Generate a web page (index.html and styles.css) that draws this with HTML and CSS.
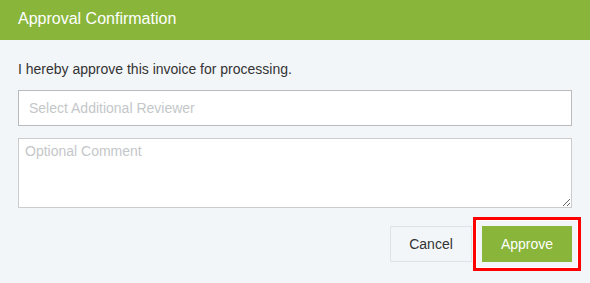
FILE: index.html
```html
<!DOCTYPE html>
<html lang="en">
<head>
  <meta charset="UTF-8">
  <title>Approval Confirmation</title>
  <link rel="stylesheet" href="styles.css">
</head>
<body>

  <div class="modal">
    <div class="modal-header">Approval Confirmation</div>

    <div class="modal-body">
      <p class="intro">I hereby approve this invoice for processing.</p>

      <input type="text" class="reviewer" placeholder="Select Additional Reviewer">

      <textarea class="comment" placeholder="Optional Comment"></textarea>

      <div class="actions">
        <button class="btn btn-cancel">Cancel</button>
        <button class="btn btn-approve">Approve</button>
      </div>
    </div>
  </div>

</body>
</html>
```

FILE: styles.css
```css
body {
  margin: 0;
  background-color: #f3f6f9;
  font-family: "Liberation Sans", Arial, sans-serif;
  color: #333;
}

.modal {
  width: 590px;
  height: 283px;
  background-color: #f3f6f9;
}

.modal-header {
  height: 40px;
  line-height: 38px;
  padding-left: 18px;
  background-color: #88b53a;
  color: #fff;
  font-size: 16px;
}

.modal-body {
  padding: 0 18px;
}

.intro {
  margin: 0;
  padding-top: 19px;
  height: 31px;
  line-height: 20px;
  font-size: 14px;
  color: #333;
}

.reviewer {
  display: block;
  box-sizing: border-box;
  width: 554px;
  height: 36px;
  margin: 0;
  padding: 0 10px;
  border: 1px solid #b9bcbf;
  background-color: #fff;
  font-family: inherit;
  font-size: 14px;
  outline: none;
}

.comment {
  display: block;
  box-sizing: border-box;
  width: 554px;
  height: 70px;
  margin: 12px 0 0;
  padding: 4px 6px;
  border: 1px solid #ccc;
  background-color: #fff;
  font-family: inherit;
  font-size: 14px;
  outline: none;
}

.reviewer::placeholder,
.comment::placeholder {
  color: #c4c7ca;
}

.actions {
  display: flex;
  justify-content: flex-end;
  gap: 10px;
  margin-top: 18px;
}

.btn {
  height: 36px;
  font-family: inherit;
  font-size: 14px;
  border-radius: 0;
  cursor: pointer;
}

.btn-cancel {
  width: 82px;
  background-color: #f3f6f9;
  border: 1px solid #dfe3e7;
  color: #333;
}

.btn-approve {
  width: 90px;
  background-color: #88b53a;
  border: none;
  color: #fff;
  box-shadow: 0 0 0 5px #f3f6f9, 0 0 0 6px #fff;
  outline: 3px solid #ff0000;
  outline-offset: 6px;
}
```
